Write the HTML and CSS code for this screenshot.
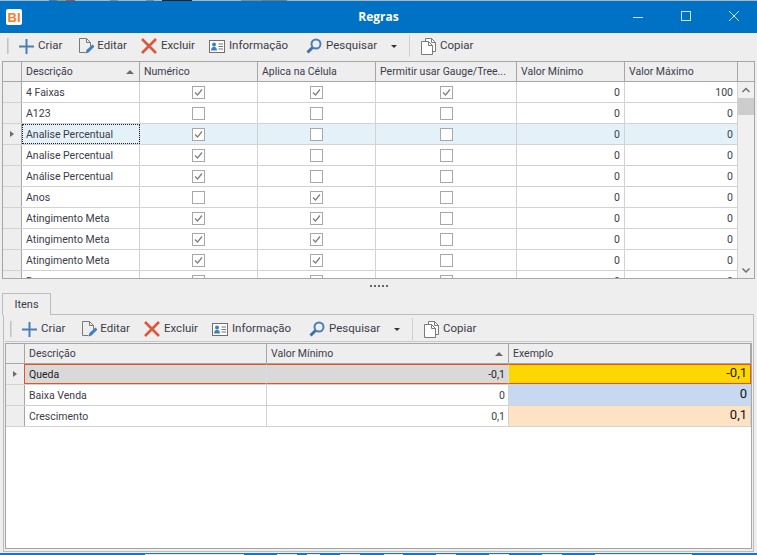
FILE: index.html
```html
<!DOCTYPE html>
<html lang="pt">
<head>
<meta charset="utf-8">
<title>Regras</title>
<link rel="stylesheet" href="styles.css">
</head>
<body>
<svg class="defs" width="0" height="0" aria-hidden="true">
  <defs>
    <symbol id="i-plus" viewBox="0 0 15 15"><path d="M7.500 0v15M0 7.500h15" stroke="#4a7fb5" stroke-width="2" fill="none"/></symbol>
    <symbol id="i-edit" viewBox="0 0 16 16"><path d="M1.500 .5h7l4 4v4M1.500 .5v14h6M8.500 .5v4h4" stroke="#7a7a7a" fill="none"/><path d="M7.500 15.500l1-3.500 6-5.500 2 2-6 6z" fill="#3f7fc1"/></symbol>
    <symbol id="i-x" viewBox="0 0 16 16"><path d="M1 1l14 14M15 1L1 15" stroke="#d9573a" stroke-width="2.600" fill="none"/></symbol>
    <symbol id="i-info" viewBox="0 0 16 13"><rect x=".5" y=".5" width="15" height="12" fill="#fff" stroke="#707070"/><circle cx="5" cy="4.500" r="2" fill="#3f7fc1"/><path d="M2 10.500c0-5 6-5 6 0z" fill="#3f7fc1"/><path d="M9.500 4h4.500M9.500 6.500h4.500M9.500 9h4.500" stroke="#707070"/></symbol>
    <symbol id="i-search" viewBox="0 0 16 16"><circle cx="10" cy="6" r="4.500" fill="none" stroke="#4a7fb5" stroke-width="2"/><path d="M6.500 9.500L1.500 14.500" stroke="#3f72a8" stroke-width="3"/></symbol>
    <symbol id="i-copy" viewBox="0 0 15 17"><path d="M4.500 3.500v-3h6l4 4v9h-3" fill="#fff" stroke="#7a7a7a"/><path d="M.5 3.500h7l4 4v9h-11z" fill="#fff" stroke="#7a7a7a"/><path d="M7.500 3.500v4h4M10.500 .5v4h4" fill="none" stroke="#7a7a7a"/></symbol>
    <symbol id="i-check" viewBox="0 0 13 13"><rect x=".5" y=".5" width="12" height="12" fill="#fff" stroke="#a8a8a8"/><path d="M3 6.500l2.500 2.500L10 3.500" fill="none" stroke="#7d7d7d" stroke-width="1.200"/></symbol>
    <symbol id="i-empty" viewBox="0 0 13 13"><rect x=".5" y=".5" width="12" height="12" fill="#fff" stroke="#a8a8a8"/></symbol>
  </defs>
</svg>

<div class="strip strip-top"></div>

<header class="titlebar">
  <div class="title-left"><div class="app-icon"><span>BI</span></div></div>
  <h1 class="title">Regras</h1>
  <div class="win-buttons">
    <svg class="win-btn" width="10" height="10" viewBox="0 0 10 10"><path d="M0 6.500h10" stroke="#cfe3f3"/></svg>
    <svg class="win-btn" width="10" height="10" viewBox="0 0 10 10"><rect x=".5" y=".5" width="9" height="9" fill="none" stroke="#cfe3f3"/></svg>
    <svg class="win-btn" width="10" height="10" viewBox="0 0 10 10"><path d="M0 0l10 10M10 0L0 10" stroke="#cfe3f3"/></svg>
  </div>
</header>

<div class="toolbar">
  <span class="grip"></span>
  <span class="tool t-criar"><svg width="15" height="15"><use href="#i-plus"/></svg>Criar</span>
  <span class="tool t-editar"><svg width="16" height="16"><use href="#i-edit"/></svg>Editar</span>
  <span class="tool t-excluir"><svg width="16" height="16"><use href="#i-x"/></svg>Excluir</span>
  <span class="tool t-info"><svg width="16" height="13"><use href="#i-info"/></svg>Informação</span>
  <span class="tool t-search"><svg width="16" height="16"><use href="#i-search"/></svg>Pesquisar</span>
  <span class="caret"></span>
  <span class="tool-sep"></span>
  <span class="tool t-copy"><svg width="15" height="17"><use href="#i-copy"/></svg>Copiar</span>
</div>

<section class="grid grid-top">
  <div class="row head cols-top">
    <div class="c ind"></div>
    <div class="c sorted">Descrição<i class="sort"></i></div>
    <div class="c">Numérico</div>
    <div class="c">Aplica na Célula</div>
    <div class="c">Permitir usar Gauge/Tree...</div>
    <div class="c">Valor Mínimo</div>
    <div class="c">Valor Máximo</div>
    <div class="c corner"></div>
  </div>
  <div class="grid-body">
    <div class="rows">
      <div class="row cols-top"><div class="c ind"></div><div class="c">4 Faixas</div><div class="c ck"><svg width="13" height="13"><use href="#i-check"/></svg></div><div class="c ck"><svg width="13" height="13"><use href="#i-check"/></svg></div><div class="c ck"><svg width="13" height="13"><use href="#i-check"/></svg></div><div class="c num">0</div><div class="c num">100</div></div>
      <div class="row cols-top"><div class="c ind"></div><div class="c">A123</div><div class="c ck"><svg width="13" height="13"><use href="#i-empty"/></svg></div><div class="c ck"><svg width="13" height="13"><use href="#i-empty"/></svg></div><div class="c ck"><svg width="13" height="13"><use href="#i-empty"/></svg></div><div class="c num">0</div><div class="c num">0</div></div>
      <div class="row cols-top is-current"><div class="c ind"><i class="arrow"></i></div><div class="c focus">Analise Percentual</div><div class="c ck"><svg width="13" height="13"><use href="#i-check"/></svg></div><div class="c ck"><svg width="13" height="13"><use href="#i-empty"/></svg></div><div class="c ck"><svg width="13" height="13"><use href="#i-empty"/></svg></div><div class="c num">0</div><div class="c num">0</div></div>
      <div class="row cols-top"><div class="c ind"></div><div class="c">Analise Percentual</div><div class="c ck"><svg width="13" height="13"><use href="#i-check"/></svg></div><div class="c ck"><svg width="13" height="13"><use href="#i-empty"/></svg></div><div class="c ck"><svg width="13" height="13"><use href="#i-empty"/></svg></div><div class="c num">0</div><div class="c num">0</div></div>
      <div class="row cols-top"><div class="c ind"></div><div class="c">Análise Percentual</div><div class="c ck"><svg width="13" height="13"><use href="#i-check"/></svg></div><div class="c ck"><svg width="13" height="13"><use href="#i-empty"/></svg></div><div class="c ck"><svg width="13" height="13"><use href="#i-empty"/></svg></div><div class="c num">0</div><div class="c num">0</div></div>
      <div class="row cols-top"><div class="c ind"></div><div class="c">Anos</div><div class="c ck"><svg width="13" height="13"><use href="#i-empty"/></svg></div><div class="c ck"><svg width="13" height="13"><use href="#i-check"/></svg></div><div class="c ck"><svg width="13" height="13"><use href="#i-empty"/></svg></div><div class="c num">0</div><div class="c num">0</div></div>
      <div class="row cols-top"><div class="c ind"></div><div class="c">Atingimento Meta</div><div class="c ck"><svg width="13" height="13"><use href="#i-check"/></svg></div><div class="c ck"><svg width="13" height="13"><use href="#i-check"/></svg></div><div class="c ck"><svg width="13" height="13"><use href="#i-empty"/></svg></div><div class="c num">0</div><div class="c num">0</div></div>
      <div class="row cols-top"><div class="c ind"></div><div class="c">Atingimento Meta</div><div class="c ck"><svg width="13" height="13"><use href="#i-check"/></svg></div><div class="c ck"><svg width="13" height="13"><use href="#i-check"/></svg></div><div class="c ck"><svg width="13" height="13"><use href="#i-empty"/></svg></div><div class="c num">0</div><div class="c num">0</div></div>
      <div class="row cols-top"><div class="c ind"></div><div class="c">Atingimento Meta</div><div class="c ck"><svg width="13" height="13"><use href="#i-check"/></svg></div><div class="c ck"><svg width="13" height="13"><use href="#i-check"/></svg></div><div class="c ck"><svg width="13" height="13"><use href="#i-empty"/></svg></div><div class="c num">0</div><div class="c num">0</div></div>
      <div class="row cols-top"><div class="c ind"></div><div class="c">Bonus</div><div class="c ck"><svg width="13" height="13"><use href="#i-empty"/></svg></div><div class="c ck"><svg width="13" height="13"><use href="#i-check"/></svg></div><div class="c ck"><svg width="13" height="13"><use href="#i-empty"/></svg></div><div class="c num">0</div><div class="c num">0</div></div>
    </div>
    <div class="scrollbar">
      <svg width="16" height="16" viewBox="0 0 16 16"><path d="M4.500 10L8 6.500l3.500 3.500" fill="none" stroke="#6f6f6f" stroke-width="1.500"/></svg>
      <div class="thumb"></div>
      <div class="track"></div>
      <svg width="16" height="16" viewBox="0 0 16 16"><path d="M4.500 6.500L8 10l3.500-3.500" fill="none" stroke="#6f6f6f" stroke-width="1.500"/></svg>
    </div>
  </div>
</section>

<div class="splitter"><span class="dots"></span></div>

<div class="tabs"><div class="tab">Itens</div></div>

<section class="tab-page">
  <div class="toolbar toolbar-inner">
    <span class="grip"></span>
    <span class="tool t-criar"><svg width="15" height="15"><use href="#i-plus"/></svg>Criar</span>
    <span class="tool t-editar"><svg width="16" height="16"><use href="#i-edit"/></svg>Editar</span>
    <span class="tool t-excluir"><svg width="16" height="16"><use href="#i-x"/></svg>Excluir</span>
    <span class="tool t-info"><svg width="16" height="13"><use href="#i-info"/></svg>Informação</span>
    <span class="tool t-search"><svg width="16" height="16"><use href="#i-search"/></svg>Pesquisar</span>
    <span class="caret"></span>
    <span class="tool-sep"></span>
    <span class="tool t-copy"><svg width="15" height="17"><use href="#i-copy"/></svg>Copiar</span>
  </div>
  <div class="grid grid-bottom">
    <div class="row head cols-bottom">
      <div class="c ind"></div>
      <div class="c">Descrição</div>
      <div class="c sorted">Valor Mínimo<i class="sort"></i></div>
      <div class="c">Exemplo</div>
    </div>
    <div class="row cols-bottom is-active">
      <div class="c ind"><i class="arrow"></i></div>
      <div class="c">Queda</div>
      <div class="c num">-0,1</div>
      <div class="c num big ex-gold">-0,1</div>
    </div>
    <div class="row cols-bottom">
      <div class="c ind"></div>
      <div class="c">Baixa Venda</div>
      <div class="c num">0</div>
      <div class="c num big ex-blue">0</div>
    </div>
    <div class="row cols-bottom">
      <div class="c ind"></div>
      <div class="c">Crescimento</div>
      <div class="c num">0,1</div>
      <div class="c num big ex-peach">0,1</div>
    </div>
  </div>
</section>

<div class="strip strip-bottom"></div>
</body>
</html>
```
FILE: styles.css
```css
* { box-sizing: border-box; }
html, body { margin: 0; padding: 0; }
body {
  width: 757px;
  height: 555px;
  overflow: hidden;
  background: #eeeeee;
  color: #3c3c4a;
  font: 10.5px/1 Roboto, "Open Sans", sans-serif;
  display: flex;
  flex-direction: column;
}
.defs { position: absolute; }

.strip { flex: none; }
.strip-top {
  height: 1px;
  background: linear-gradient(90deg, #b4b4b4 0 49px, #4a7a9a 49px 57px, #a09a60 57px 66px, #b05030 66px 75px, #b4b4b4 75px 110px, #888 110px 118px, #b4b4b4 118px 146px, #888 146px 154px, #b4b4b4 154px 162px, #222 162px 192px, #b4b4b4 192px 241px, #888 241px 262px, #777 262px 287px, #b4b4b4 287px);
}
.strip-bottom {
  height: 2px;
  margin-top: auto;
  background:
    linear-gradient(#1a75c4 0 1px, transparent 1px),
    linear-gradient(90deg, #1a75c4 0 145px, #e8e8e8 145px 244px, #1a75c4 244px 277px, #e8e8e8 277px 297px, #1a75c4 297px 307px, #e8e8e8 307px 320px, #1a75c4 320px 340px, #e8e8e8 340px 360px, #1a75c4 360px 384px, #e8e8e8 384px 403px, #1a75c4 403px 436px, #e8e8e8 436px 456px, #1a75c4 456px 489px, #e8e8e8 489px 509px, #1a75c4 509px 542px, #e8e8e8 542px 562px, #1a75c4 562px 595px, #e8e8e8 595px 692px, #1a75c4 692px);
}

.titlebar {
  flex: none;
  height: 32px;
  background: #0072c6;
  display: grid;
  grid-template-columns: 1fr auto 1fr;
  align-items: center;
}
.title-left { display: flex; }
.app-icon {
  width: 16px;
  height: 16px;
  margin-left: 6px;
  background: #fff;
  border-radius: 2px;
  display: flex;
  align-items: center;
  justify-content: center;
}
.app-icon span { color: #f47d30; font: bold 13px/1 "Liberation Sans", sans-serif; }
.title {
  margin: 0;
  color: #fff;
  font: bold 12px/1 "Open Sans", sans-serif;
}
.win-buttons { display: flex; justify-content: flex-end; gap: 38px; margin-right: 18px; margin-top: -3px; }
.win-btn { display: block; }

.toolbar {
  flex: none;
  height: 26px;
  display: flex;
  align-items: center;
  padding-left: 7px;
  background: #eeeeee;
  color: #3c3c4a;
  font-size: 11.5px;
}
.grip { width: 2px; height: 16px; border-left: 1px solid #c4c4c4; border-right: 1px solid #d4d4d4; margin-right: 10px; }
.tool { display: inline-flex; align-items: center; gap: 4px; white-space: nowrap; }
.tool svg { flex: none; }
.t-criar { margin-right: 16px; }
.t-editar { gap: 3px; margin-right: 14px; }
.t-excluir { margin-right: 14px; }
.t-info { margin-right: 18px; }
.t-search { margin-right: 14px; }
.caret { width: 0; height: 0; border: 3px solid transparent; border-top: 3px solid #333; border-bottom: 0; margin-right: 12px; }
.tool-sep { width: 1px; height: 22px; background: #cfcfcf; margin-right: 11px; }

.grid {
  background: #fff;
  border: 1px solid #a6a6a6;
  overflow: hidden;
}
.grid-top { flex: none; height: 218px; margin: 2px 2px 0 2px; }
.row { display: grid; height: 21px; border-bottom: 1px solid #d2d2d2; }
.cols-top { grid-template-columns: 19px 118px 118px 118px 141px 108px 113px; }
.head.cols-top { grid-template-columns: 19px 118px 118px 118px 141px 108px 113px 1fr; }
.cols-bottom { grid-template-columns: 19px 242px 242px 1fr; }
.c {
  display: flex;
  align-items: center;
  padding: 2px 4px 0;
  border-right: 1px solid #d2d2d2;
  white-space: nowrap;
  overflow: hidden;
  color: #3c3c4a;
}
.ind { background: #eeeeee; border-right-color: #a6a6a6; padding: 0 0 0 7px; }
.head { height: 20px; background: #eeeeee; border-bottom-color: #a6a6a6; }
.head .c { border-right-color: #a6a6a6; padding-top: 1px; }
.head .ind { padding-top: 0; }
.head .sorted { justify-content: space-between; padding-right: 4px; }
.corner { border-right: 0; }
.sort { width: 0; height: 0; border: 4px solid transparent; border-bottom: 4px solid #6b6b6b; border-top: 0; margin-right: 1px; }
.ck { justify-content: center; padding: 0; }
.ck svg { display: block; }
.num { justify-content: flex-end; }
.cols-bottom .num { padding-right: 3px; }
.arrow { width: 0; height: 0; border: 3.500px solid transparent; border-left: 4px solid #6b6b6b; border-right: 0; }

.is-current .c:not(.ind) { background: #e5f1f9; }
.is-current .focus { outline: 1px dotted #222; outline-offset: -1px; }

.grid-body { display: flex; height: 196px; overflow: hidden; }
.rows { flex: none; width: 735px; }
.scrollbar { flex: 1; background: #f0f0f0; display: flex; flex-direction: column; }
.scrollbar svg { flex: none; display: block; }
.thumb { flex: none; height: 17px; background: #cdcdcd; }
.track { flex: 1; }

.splitter { flex: none; height: 14px; display: flex; justify-content: center; padding-top: 6px; }
.dots { width: 18px; height: 2px; background: repeating-linear-gradient(90deg, #666 0 2px, transparent 2px 4px); }

.tabs { flex: none; height: 22px; display: flex; padding-left: 2px; }
.tab {
  width: 49px;
  height: 22px;
  display: flex;
  align-items: center;
  justify-content: center;
  background: #eeeeee;
  border: 1px solid #bcbcbc;
  border-bottom: 0;
  position: relative;
  z-index: 1;
  color: #3c3c4a;
  font-size: 11px;
}

.tab-page {
  flex: none;
  height: 238px;
  margin: -1px 3px 0 3px;
  padding: 0 1px 2px 1px;
  border: 1px solid #bcbcbc;
  display: flex;
  flex-direction: column;
}
.toolbar-inner { height: 27px; padding-top: 2px; padding-left: 5px; border-bottom: 1px solid #c8c8c8; }
.grid-bottom { flex: 1; margin-top: 1px; }

.is-active { background: #d9d9d9; }
.is-active .c { background: #d9d9d9; border-top: 1px solid #e8541e; border-bottom: 1px solid #e8541e; border-right: 1px solid #cfe0ec; color: #222; }
.is-active .ind { background: #eeeeee; border-top: 0; border-bottom: 0; border-right: 1px solid #e8541e; }
.is-active .c:last-child { border-right: 1px solid #e8541e; }
.big { font-size: 13px; color: #111; padding-top: 0; padding-bottom: 3px; }
.ex-gold { background: #ffd700 !important; }
.ex-blue { background: #c6d9f0; }
.ex-peach { background: #fde2c4; }
```
